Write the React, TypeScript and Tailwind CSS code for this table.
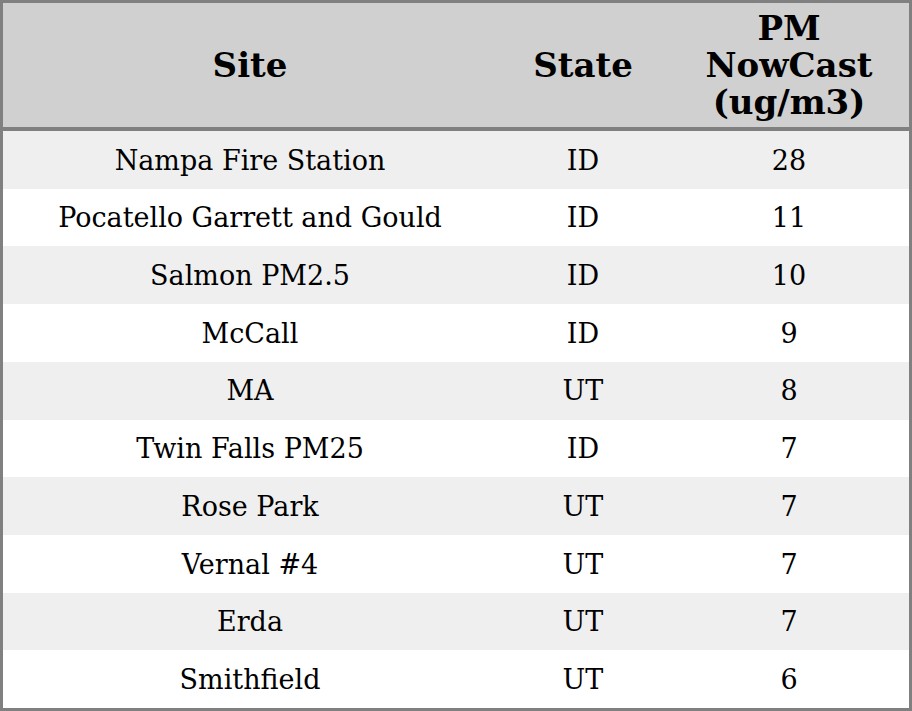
const rows = [
  { site: "Nampa Fire Station", state: "ID", pm: "28" },
  { site: "Pocatello Garrett and Gould", state: "ID", pm: "11" },
  { site: "Salmon PM2.5", state: "ID", pm: "10" },
  { site: "McCall", state: "ID", pm: "9" },
  { site: "MA", state: "UT", pm: "8" },
  { site: "Twin Falls PM25", state: "ID", pm: "7" },
  { site: "Rose Park", state: "UT", pm: "7" },
  { site: "Vernal #4", state: "UT", pm: "7" },
  { site: "Erda", state: "UT", pm: "7" },
  { site: "Smithfield", state: "UT", pm: "6" },
];

export default function App() {
  return (
    <div className="w-[912px] h-[711px] bg-white font-['DejaVu_Serif',serif] text-black">
      <div className="h-full flex flex-col border-[3px] border-[#808080]">
        {/* header */}
        <div className="h-[128px] shrink-0 flex items-center bg-[#d0d0d0] border-b-4 border-[#808080] text-[34px] font-bold leading-[37px] text-center">
          <div className="w-[494px]">Site</div>
          <div className="w-[172px]">State</div>
          <div className="flex-1">PM<br />NowCast<br />(ug/m3)</div>
        </div>

        {/* rows */}
        <div className="flex-1 flex flex-col">
          {rows.map((r, i) => (
            <div
              key={i}
              className={`flex-1 flex items-center pt-[2px] text-[27px] text-center ${i % 2 === 0 ? "bg-[#efefef]" : "bg-white"}`}
            >
              <div className="w-[494px]">{r.site}</div>
              <div className="w-[172px]">{r.state}</div>
              <div className="flex-1">{r.pm}</div>
            </div>
          ))}
        </div>
      </div>
    </div>
  );
}
